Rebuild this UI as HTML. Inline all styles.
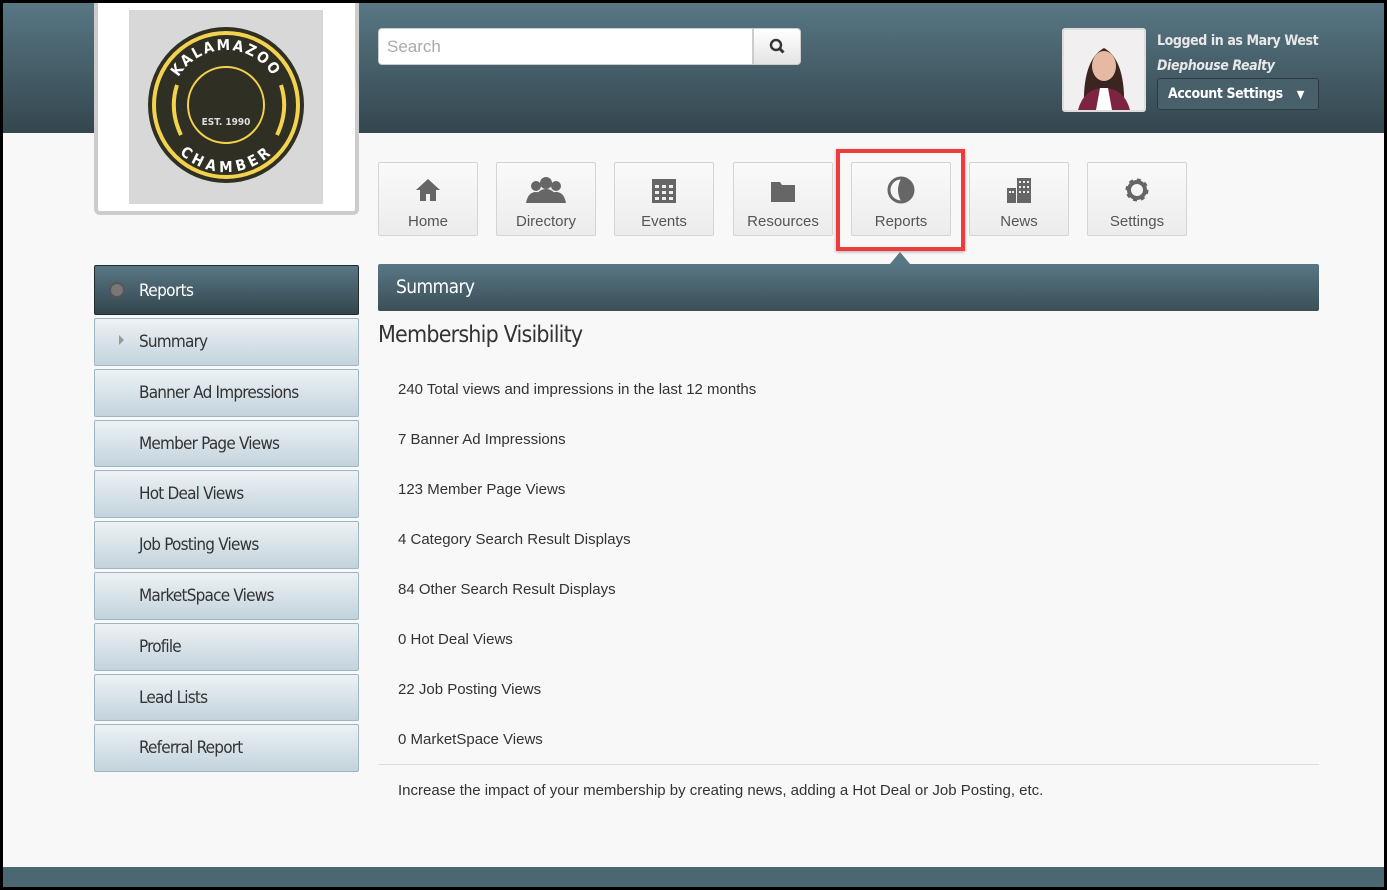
<!DOCTYPE html>
<html><head><meta charset="utf-8"><style>
*{box-sizing:border-box;margin:0;padding:0}
body{width:1387px;height:890px;background:#000;font-family:"Liberation Sans",sans-serif;overflow:hidden;position:relative}
#pg{position:absolute;left:3px;top:3px;width:1381px;height:884px;background:#f8f8f8;overflow:hidden}
#hdr{position:absolute;left:0;top:0;width:100%;height:130px;background:linear-gradient(#587784,#34464e)}
#logo{position:absolute;left:91px;top:-5px;width:265px;height:217px;background:#fff;border:4px solid #ccc;border-top:none;border-radius:0 0 6px 6px}
#logo .bg{position:absolute;left:31px;top:12px;width:194px;height:194px;background:#d8d8d8}
#search{position:absolute;left:375px;top:25px;width:375px;height:37px;background:#fff;border:1px solid #ccc;border-radius:4px 0 0 4px;font-size:17px;color:#aaa;padding:8px}
#sbtn{position:absolute;left:750px;top:25px;width:48px;height:37px;background:linear-gradient(#fff,#e4e4e4);border:1px solid #ccc;border-radius:0 4px 4px 0}
#av{position:absolute;left:1059px;top:25px;width:84px;height:84px;background:#eee;border:2px solid #ddd;border-radius:3px;overflow:hidden}
.ut{position:absolute;left:1154px;color:#e8e8e8;font-weight:bold;font-size:14px;font-family:"DejaVu Sans Condensed","Liberation Sans",sans-serif;letter-spacing:-.4px}
#acc{position:absolute;left:1154px;top:75px;width:162px;height:32px;background:#476069;border:1px solid #2a3a40;border-radius:3px;color:#fff;font-weight:bold;font-size:14px;padding:7px 10px;font-family:"DejaVu Sans Condensed",sans-serif;letter-spacing:-.4px}
.nb{position:absolute;top:159px;width:100px;height:74px;background:linear-gradient(#fafafa,#ececec);border:1px solid #d4d4d4;border-radius:2px;text-align:center;font-size:15px;color:#555}
.nb svg{display:block;margin:13px auto 9px;height:28px}
#red{position:absolute;left:833px;top:146px;width:129px;height:102px;border:4px solid #ee3b3b;box-shadow:0 1px 3px rgba(0,0,0,.3)}
#tri{position:absolute;left:887px;top:249px;width:0;height:0;border-left:10px solid transparent;border-right:10px solid transparent;border-bottom:12px solid #587784}
#sum{position:absolute;left:375px;top:261px;width:941px;height:47px;background:linear-gradient(#587784,#3b4f58);color:#fff;font-size:19px;padding:12px 18px;font-family:"DejaVu Sans Condensed",sans-serif;letter-spacing:-.6px;border-radius:2px}
h1{position:absolute;left:375px;top:319px;font-weight:normal;font-size:23px;color:#333;font-family:"DejaVu Sans Condensed",sans-serif;letter-spacing:-.8px}
.r{position:absolute;left:395px;font-size:15px;color:#333}
#hr{position:absolute;left:375px;top:761px;width:941px;border-top:1px solid #ddd}
#side{position:absolute;left:91px;top:262px;width:265px}
.sh{height:50px;background:linear-gradient(#587784,#33454d);border:1px solid #1f2a2f;border-radius:2px;color:#fff;font-size:17px;padding:15px 44px;position:relative;font-family:"DejaVu Sans Condensed",sans-serif;letter-spacing:-.6px}
.si{height:47.8px;margin-top:3px;background:linear-gradient(#edf2f5,#c3d3dc);border:1px solid #9fb6c3;border-radius:2px;color:#333;font-size:17px;padding:13px 44px;font-family:"DejaVu Sans Condensed",sans-serif;letter-spacing:-.8px;white-space:nowrap}
#side .si:first-of-type{margin-top:2px}
#ftr{position:absolute;left:0;top:864px;width:100%;height:20px;background:#4b6772}
</style></head><body><div id="pg">
<div id="hdr"></div>
<div id="logo"><div class="bg">
<svg width="194" height="194" viewBox="0 0 194 194"><circle cx="97" cy="95" r="78" fill="#2f2f24"/><circle cx="97" cy="95" r="72" fill="none" stroke="#f2d24e" stroke-width="4"/><circle cx="97" cy="95" r="38" fill="none" stroke="#f2d24e" stroke-width="2"/>
<text x="97" y="115" fill="#ddd" font-size="10" text-anchor="middle" font-family="DejaVu Sans Condensed" font-weight="bold">EST. 1990</text>
<path id="a1" d="M42 95 A55 55 0 0 1 152 95" fill="none"/><text fill="#fff" font-size="15" font-weight="bold" font-family="DejaVu Sans Condensed" letter-spacing="2"><textPath href="#a1" startOffset="50%" text-anchor="middle">KALAMAZOO</textPath></text>
<path id="a2" d="M40 95 A57 57 0 0 0 154 95" fill="none"/><text fill="#fff" font-size="15" font-weight="bold" font-family="DejaVu Sans Condensed" letter-spacing="2" dy="10"><textPath href="#a2" startOffset="50%" text-anchor="middle">CHAMBER</textPath></text>
<path d="M48 75 Q40 100 52 125 M152 75 Q160 100 148 125" stroke="#f2d24e" stroke-width="4" fill="none"/></svg></div></div>
<div id="search">Search</div>
<div id="sbtn"><svg width="46" height="35" viewBox="0 0 46 35"><circle cx="22" cy="16" r="5" fill="none" stroke="#333" stroke-width="2.4"/><path d="M25.5 19.5l4 4" stroke="#333" stroke-width="3"/></svg></div>
<div id="av"><svg width="80" height="80" viewBox="0 0 80 80"><rect width="80" height="80" fill="#f1efef"/><path d="M20 80 Q18 30 40 18 Q62 30 60 80Z" fill="#3a2520"/><ellipse cx="40" cy="36" rx="12" ry="15" fill="#e6b9a2"/><path d="M14 80 Q20 58 40 58 Q60 58 66 80Z" fill="#7d2540"/><path d="M32 80 L36 58 H44 L48 80Z" fill="#fff"/></svg></div>
<div class="ut" style="top:30px">Logged in as Mary West</div>
<div class="ut" style="top:55px;font-style:italic">Diephouse Realty</div>
<div id="acc">Account Settings <span style="font-size:11px;margin-left:10px">▼</span></div>

<div class="nb" style="left:375px"><svg viewBox="0 0 28 28" width="28"><path d="M14 3L2 14h4v11h6v-7h4v7h6V14h4z" fill="#666"/></svg>Home</div>
<div class="nb" style="left:493px"><svg viewBox="0 0 44 28" width="44"><circle cx="12" cy="10" r="5" fill="#666"/><circle cx="32" cy="10" r="5" fill="#666"/><circle cx="22" cy="7" r="6" fill="#666"/><path d="M2 27q2-11 10-11t10 11zM22 27q2-11 10-11t10 11zM10 27q2-14 12-14t12 14z" fill="#666"/></svg>Directory</div>
<div class="nb" style="left:611px"><svg viewBox="0 0 28 28" width="28"><rect x="2" y="3" width="24" height="24" fill="#666"/><g fill="#eee"><rect x="5" y="9" width="4" height="3"/><rect x="12" y="9" width="4" height="3"/><rect x="19" y="9" width="4" height="3"/><rect x="5" y="15" width="4" height="3"/><rect x="12" y="15" width="4" height="3"/><rect x="19" y="15" width="4" height="3"/><rect x="5" y="21" width="4" height="3"/><rect x="12" y="21" width="4" height="3"/><rect x="19" y="21" width="4" height="3"/></g></svg>Events</div>
<div class="nb" style="left:730px"><svg viewBox="0 0 28 28" width="28"><path d="M2 6h9l2 3h13v17H2z" fill="#666"/></svg>Resources</div>
<div class="nb" style="left:848px"><svg viewBox="0 0 28 28" width="28"><circle cx="14" cy="14" r="12" fill="none" stroke="#666" stroke-width="3"/><path d="M14 3a11 11 0 0 1 0 22Q8 14 14 3" fill="#666"/></svg>Reports</div>
<div class="nb" style="left:966px"><svg viewBox="0 0 28 28" width="28"><rect x="2" y="12" width="9" height="15" fill="#666"/><rect x="12" y="2" width="14" height="25" fill="#666"/><g fill="#eee"><rect x="4" y="15" width="2" height="2"/><rect x="7" y="15" width="2" height="2"/><rect x="14" y="5" width="2" height="2"/><rect x="18" y="5" width="2" height="2"/><rect x="22" y="5" width="2" height="2"/><rect x="14" y="10" width="2" height="2"/><rect x="18" y="10" width="2" height="2"/><rect x="22" y="10" width="2" height="2"/><rect x="14" y="15" width="2" height="2"/><rect x="18" y="15" width="2" height="2"/><rect x="22" y="15" width="2" height="2"/></g></svg>News</div>
<div class="nb" style="left:1084px"><svg viewBox="0 0 28 28" width="28"><circle cx="14" cy="14" r="9" fill="none" stroke="#666" stroke-width="5" stroke-dasharray="3.5 3.5"/><circle cx="14" cy="14" r="8" fill="none" stroke="#666" stroke-width="4"/></svg>Settings</div>
<div id="red"></div><div id="tri"></div>

<div id="side">
<div class="sh"><span style="position:absolute;left:14px;top:16px;width:16px;height:16px;border-radius:50%;background:#777;border:2px solid #555"></span>Reports</div>
<div class="si" style="position:relative"><span style="position:absolute;left:24px;top:16px;border-left:5px solid #999;border-top:5px solid transparent;border-bottom:5px solid transparent"></span>Summary</div>
<div class="si">Banner Ad Impressions</div>
<div class="si">Member Page Views</div>
<div class="si">Hot Deal Views</div>
<div class="si">Job Posting Views</div>
<div class="si">MarketSpace Views</div>
<div class="si">Profile</div>
<div class="si">Lead Lists</div>
<div class="si">Referral Report</div>
</div>

<div id="sum">Summary</div>
<h1>Membership Visibility</h1>
<div class="r" style="top:378px">240 Total views and impressions in the last 12 months</div>
<div class="r" style="top:428px">7 Banner Ad Impressions</div>
<div class="r" style="top:478px">123 Member Page Views</div>
<div class="r" style="top:528px">4 Category Search Result Displays</div>
<div class="r" style="top:578px">84 Other Search Result Displays</div>
<div class="r" style="top:628px">0 Hot Deal Views</div>
<div class="r" style="top:678px">22 Job Posting Views</div>
<div class="r" style="top:728px">0 MarketSpace Views</div>
<div id="hr"></div>
<div class="r" style="top:779px">Increase the impact of your membership by creating news, adding a Hot Deal or Job Posting, etc.</div>
<div id="ftr"></div>
</div></body></html>
